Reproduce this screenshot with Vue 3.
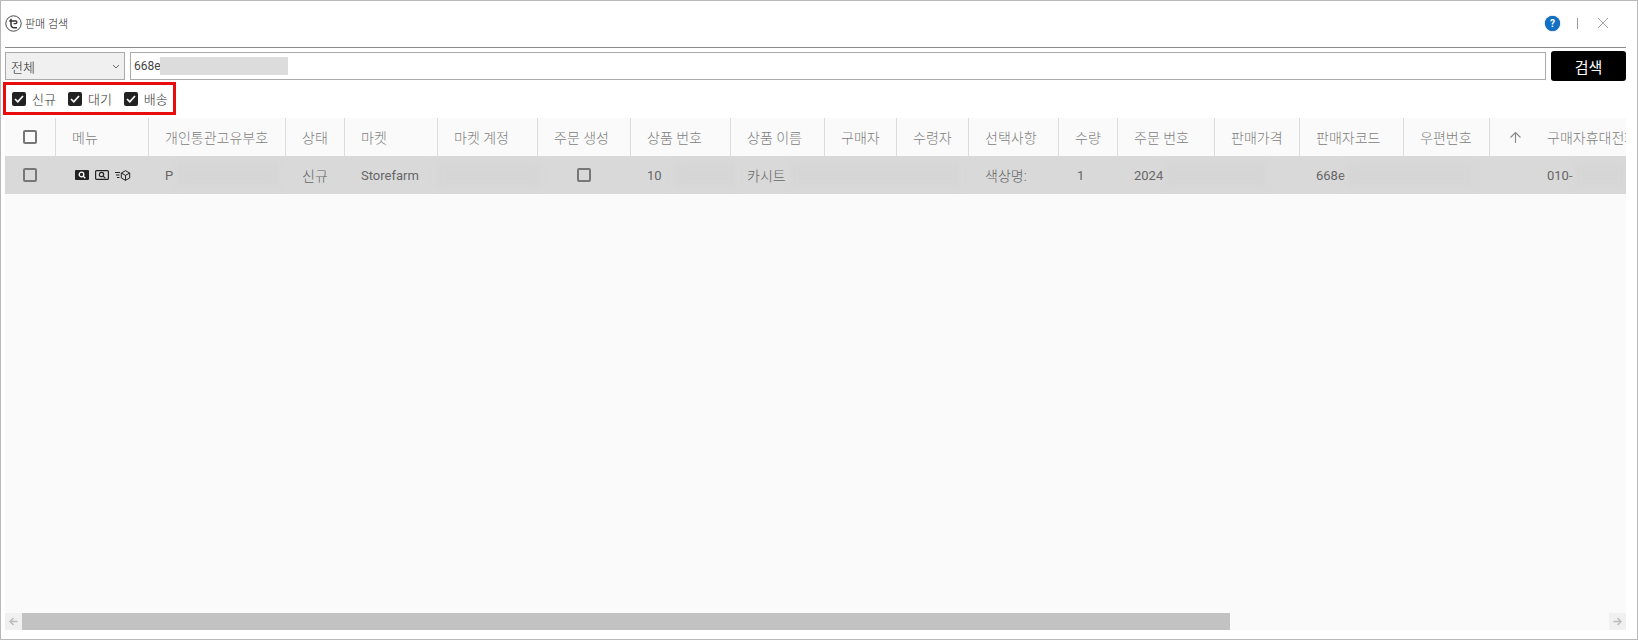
<script setup>
const headers = [
  "", "메뉴", "개인통관고유부호", "상태", "마켓", "마켓 계정", "주문 생성", "상품 번호", "상품 이름",
  "구매자", "수령자", "선택사항", "수량", "주문 번호", "판매가격", "판매자코드", "우편번호", "", "구매자휴대전화",
];

// gap / width describe the blurred-out part that follows the visible text
const cells = [
  { type: "check" },
  { type: "icons" },
  { text: "P", latin: true, gap: 5, width: 100 },
  { text: "신규" },
  { text: "Storefarm", latin: true },
  { text: "", gap: -17, width: 103 },
  { type: "check", center: true },
  { text: "10", latin: true, gap: 13, width: 60 },
  { text: "카시트", gap: 5, width: 168 },
  {},
  {},
  { text: "색상명:" },
  { text: "1", latin: true, indent: 2 },
  { text: "2024", latin: true, gap: 3, width: 100 },
  {},
  { text: "668e", latin: true, gap: 2, width: 125 },
  {},
  {},
  { text: "010-", latin: true, gap: 2, width: 50 },
];

const filters = ["신규", "대기", "배송"];
</script>

<template>
  <div class="window">
    <header class="titlebar">
      <div class="title">
        <svg class="logo" width="17" height="17" viewBox="0 0 17 17" fill="none" stroke="#333">
          <circle cx="8.5" cy="8.5" r="7.7" stroke-width="0.9" />
          <path d="M6 3.8v5.4c0 2.4 1.6 3.6 3.6 3.6h2.4" stroke-width="1.5" />
          <path d="M4.2 6h6.6c1.4 0 1.6 2.6-.2 2.6H8.6" stroke-width="1.3" />
        </svg>
        <span>판매 검색</span>
      </div>
      <div class="window-actions">
        <span class="help">?</span>
        <span class="divider"></span>
        <svg width="12" height="12" viewBox="0 0 12 12" stroke="#aaa" stroke-width="1">
          <path d="M1 1l10 10M11 1L1 11" />
        </svg>
      </div>
    </header>

    <div class="search-bar">
      <div class="select">
        <span>전체</span>
        <svg width="8" height="5" viewBox="0 0 8 5" fill="none" stroke="#666">
          <path d="M1 1l3 3 3-3" />
        </svg>
      </div>
      <div class="search-input">
        <span>668e</span>
        <span class="input-redact"></span>
      </div>
      <button class="search-btn">검색</button>
    </div>

    <div class="filters">
      <label v-for="name in filters" :key="name" class="filter">
        <span class="filter-box">
          <svg width="10" height="8" viewBox="0 0 10 8" fill="none" stroke="#fff" stroke-width="1.7">
            <path d="M1 4l2.8 2.8L9 1" />
          </svg>
        </span>
        <span>{{ name }}</span>
      </label>
    </div>

    <div class="table">
      <div class="grid head">
        <div v-for="(label, i) in headers" :key="i" class="th">
          <span v-if="i === 0" class="box"></span>
          <svg v-else-if="i === 17" class="sort" width="13" height="13" viewBox="0 0 13 13" fill="none" stroke="#888" stroke-width="1.1">
            <path d="M6.5 12V1.5M1.5 6.5l5-5 5 5" />
          </svg>
          <span v-else>{{ label }}</span>
        </div>
      </div>
      <div class="grid row">
        <div
          v-for="(cell, i) in cells"
          :key="i"
          class="td"
          :class="{ latin: cell.latin, center: cell.center }"
          :style="cell.indent ? { paddingLeft: 17 + cell.indent + 'px' } : null"
        >
          <span v-if="cell.type === 'check'" class="box"></span>
          <div v-else-if="cell.type === 'icons'" class="row-icons">
            <svg width="14" height="10" viewBox="0 0 14 10">
              <rect width="14" height="10" rx="1" fill="#222" />
              <circle cx="6.5" cy="4.5" r="2.3" fill="none" stroke="#fff" stroke-width="1.3" />
              <path d="M8.3 6.3l2 2" stroke="#fff" stroke-width="1.3" />
            </svg>
            <svg width="14" height="10" viewBox="0 0 14 10" fill="none" stroke="#222">
              <rect x="0.6" y="0.6" width="12.8" height="8.8" rx="1" stroke-width="1.2" />
              <circle cx="6.5" cy="4.5" r="2.2" stroke-width="1.2" />
              <path d="M8.2 6.2l2 2" stroke-width="1.2" />
            </svg>
            <svg width="16" height="11" viewBox="0 0 16 11" fill="none" stroke="#222" stroke-width="1">
              <path d="M0 2.5h5M1 5h3.5M2 7.5h2.5" />
              <path d="M10.5 .7l4.2 2.3v5l-4.2 2.3L6.3 8V3zM6.3 3l4.2 2.4L14.7 3M10.5 5.4v5" />
            </svg>
          </div>
          <template v-else>
            <span v-if="cell.text">{{ cell.text }}</span>
            <span
              v-if="cell.width"
              class="redact"
              :style="{ marginLeft: cell.gap + 'px', width: cell.width + 'px' }"
            ></span>
          </template>
        </div>
      </div>
      <div class="table-fill"></div>
      <div class="scrollbar">
        <span class="scroll-btn">
          <svg width="9" height="9" viewBox="0 0 9 9" fill="none" stroke="#bbb" stroke-width="1.4">
            <path d="M8.5 4.5H1M4.5 1L1 4.5 4.5 8" />
          </svg>
        </span>
        <span class="thumb"></span>
        <span class="scroll-space"></span>
        <span class="scroll-btn">
          <svg width="9" height="9" viewBox="0 0 9 9" fill="none" stroke="#bbb" stroke-width="1.4">
            <path d="M.5 4.5H8M4.5 1L8 4.5 4.5 8" />
          </svg>
        </span>
      </div>
    </div>
  </div>
</template>

<style>
html,
body {
  margin: 0;
  background: #fff;
}
</style>

<style scoped>
* {
  box-sizing: border-box;
}

.window {
  height: 640px;
  display: flex;
  flex-direction: column;
  padding: 0 11px 9px 4px;
  border: 1px solid #b9b9b9;
  background: #fff;
  font-family: Roboto, "Noto Sans CJK KR", sans-serif;
  font-weight: 300;
  overflow: hidden;
}

.titlebar {
  height: 47px;
  flex: none;
  display: flex;
  align-items: center;
  justify-content: space-between;
  border-bottom: 1px solid #8c8c8c;
  padding-bottom: 2px;
}
.title {
  display: flex;
  align-items: center;
  gap: 3px;
  font-size: 11px;
  color: #222;
}
.window-actions {
  display: flex;
  align-items: center;
  margin-right: 17px;
}
.help {
  width: 15px;
  height: 15px;
  border-radius: 50%;
  background: #1270c4;
  box-shadow: 0 0 1px #0b3f70;
  color: #fff;
  font-size: 10px;
  font-weight: 700;
  line-height: 15px;
  text-align: center;
}
.divider {
  width: 1px;
  height: 11px;
  background: #999;
  margin: 0 19px 0 17px;
}

.search-bar {
  height: 34px;
  flex: none;
  display: flex;
  align-items: center;
  gap: 5px;
  padding-top: 2px;
}
.select {
  width: 120px;
  height: 28px;
  display: flex;
  align-items: center;
  justify-content: space-between;
  padding: 0 4px 0 5px;
  background: #f0f0f0;
  border: 1px solid #aaa;
  font-size: 13px;
  color: #222;
}
.search-input {
  flex: 1;
  height: 28px;
  display: flex;
  align-items: center;
  padding-left: 3px;
  border: 1px solid #aaa;
  font-size: 12px;
  font-weight: 400;
  color: #444;
}
.input-redact {
  width: 128px;
  height: 18px;
  margin-left: -1px;
  background: #dcdcdc;
}
.search-btn {
  width: 75px;
  height: 30px;
  border: 0;
  border-radius: 3px;
  background: #000;
  color: #fff;
  font-family: inherit;
  font-size: 15px;
}

.filters {
  width: 173px;
  height: 33px;
  flex: none;
  display: flex;
  align-items: center;
  gap: 12px;
  margin: 0 0 3px -2px;
  padding-left: 6px;
  border: 3px solid #e80c0c;
  font-size: 13px;
  color: #333;
}
.filter {
  display: flex;
  align-items: center;
  flex: none;
  gap: 6px;
  white-space: nowrap;
}
.filter-box {
  width: 14px;
  height: 14px;
  display: flex;
  align-items: center;
  justify-content: center;
  border-radius: 2px;
  background: #222;
}

.table {
  flex: 1;
  min-height: 0;
  display: flex;
  flex-direction: column;
  background: #fafafa;
  overflow: hidden;
}
.grid {
  display: grid;
  grid-template-columns: 50px 93px 137px 59px 93px 100px 93px 100px 94px 72px 72px 90px 59px 97px 85px 104px 86px 41px 200px;
  flex: none;
  width: 1621px;
}
.head {
  height: 38px;
  background: #fafafa;
}
.th {
  display: flex;
  align-items: center;
  padding-left: 16px;
  border-left: 1px solid #ddd;
  font-size: 14px;
  color: #808080;
  white-space: nowrap;
}
.th:first-child {
  border-left: 0;
  padding-left: 18px;
}
.th:nth-child(18) {
  padding-left: 19px;
}
.th:nth-child(19) {
  border-left: 0;
  padding-left: 17px;
}
.sort {
  flex: none;
}
.row {
  height: 38px;
  background: #d9d9d9;
}
.td {
  display: flex;
  align-items: center;
  padding-left: 17px;
  font-size: 14px;
  color: #666;
  white-space: nowrap;
}
.td:first-child {
  padding-left: 18px;
}
.td.latin {
  font-size: 13px;
  font-weight: 400;
  color: #666;
}
.td.center {
  padding-left: 0;
  justify-content: center;
}
.box {
  width: 14px;
  height: 14px;
  flex: none;
  border: 2px solid #777;
  border-radius: 2px;
}
.row-icons {
  display: flex;
  align-items: center;
  gap: 6px;
  margin-left: 3px;
}
.redact {
  height: 24px;
  flex: none;
  background: #d6d6d6;
  filter: blur(3px);
}
.table-fill {
  flex: 1;
}
.scrollbar {
  height: 17px;
  flex: none;
  display: flex;
}
.scroll-btn {
  width: 17px;
  flex: none;
  display: flex;
  align-items: center;
  justify-content: center;
  background: #f0f0f0;
}
.thumb {
  width: 1208px;
  flex: none;
  background: #c2c2c2;
}
.scroll-space {
  flex: 1;
}
</style>
